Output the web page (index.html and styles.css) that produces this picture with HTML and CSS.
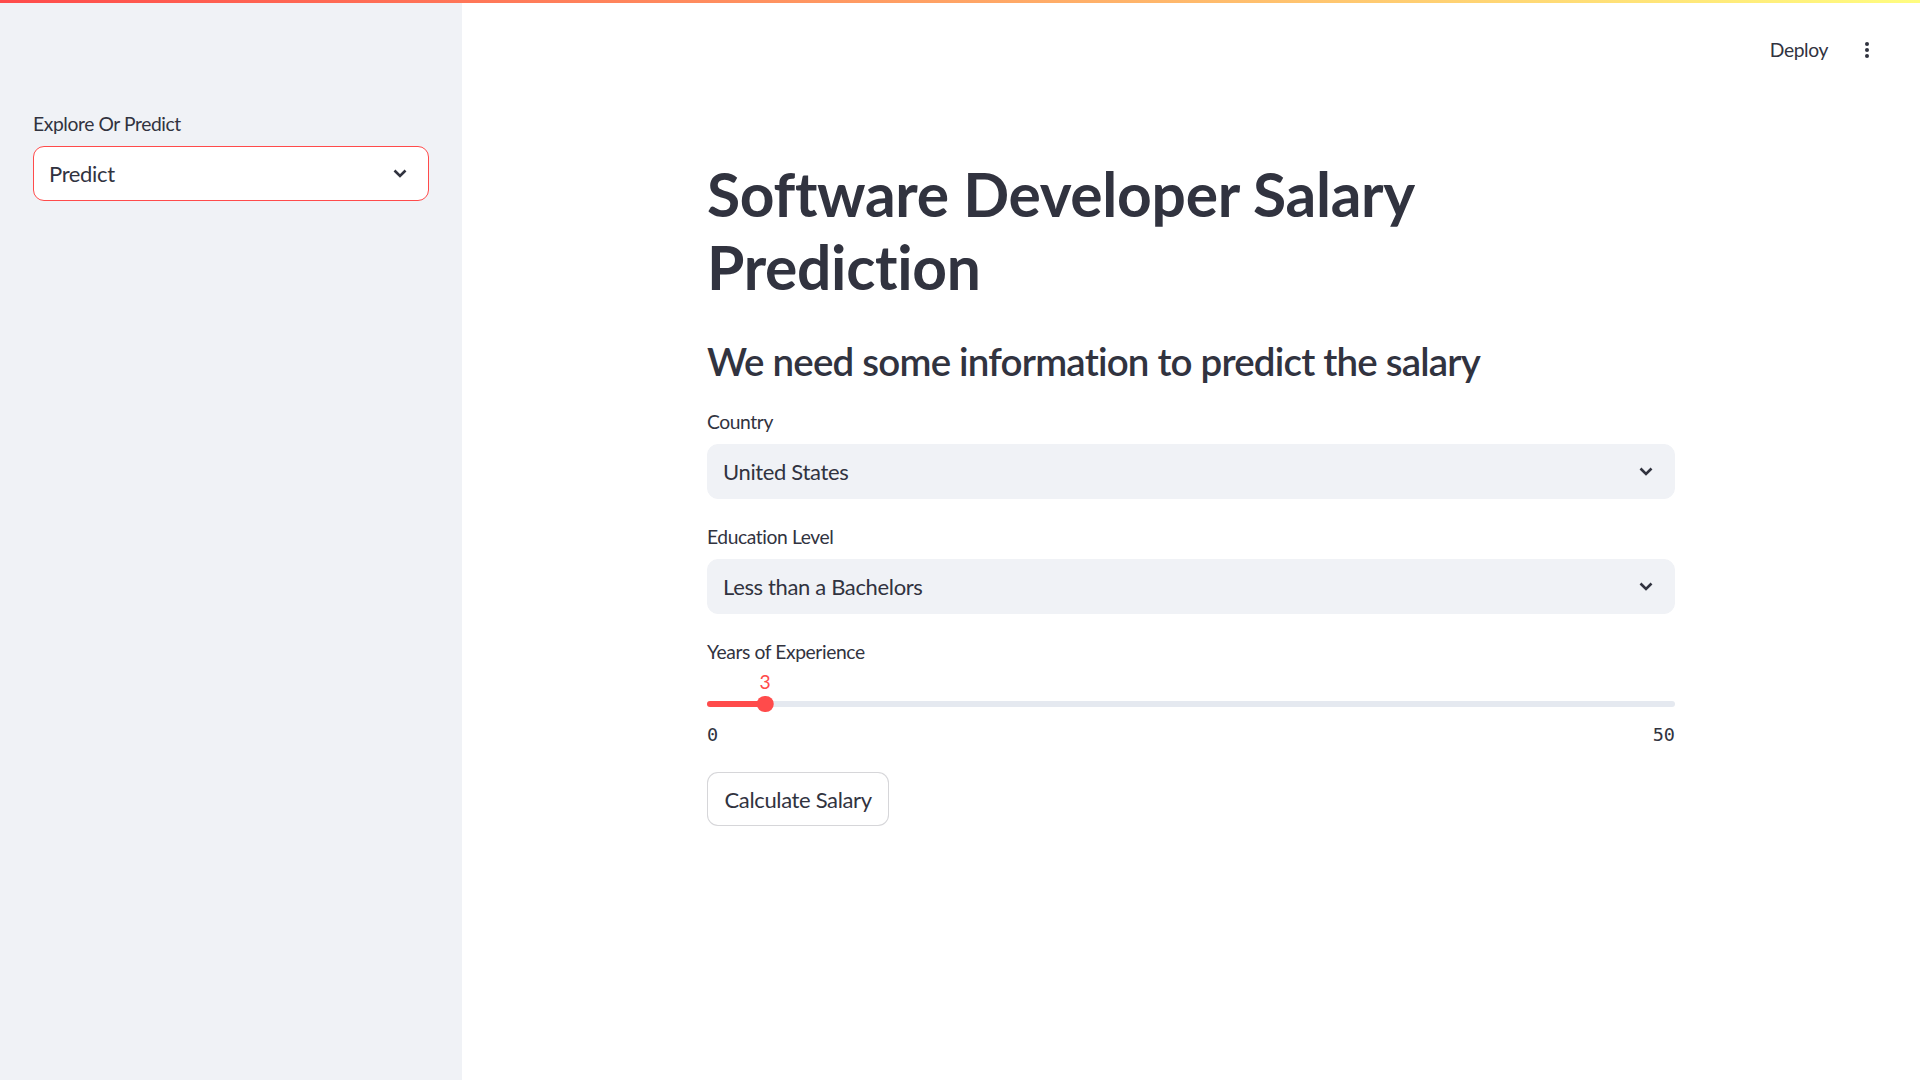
FILE: index.html
```html
<!DOCTYPE html>
<html lang="en">
<head>
<meta charset="utf-8">
<title>Software Developer Salary Prediction</title>
<link rel="stylesheet" href="styles.css">
</head>
<body>
<div class="decoration"></div>
<div class="app">
  <aside class="sidebar">
    <div class="widget">
      <div class="label">Explore Or Predict</div>
      <div class="select select-focused">
        <span class="select-value">Predict</span>
        <svg class="chevron" width="14" height="9" viewBox="0 0 14 9"><path d="M1.5 1.5 L7 7 L12.5 1.5" fill="none" stroke="#31333f" stroke-width="2.6" stroke-linejoin="miter"/></svg>
      </div>
    </div>
  </aside>
  <main class="main">
    <header class="toolbar">
      <span class="deploy">Deploy</span>
      <svg class="menu" width="24" height="24" viewBox="0 0 24 24"><circle cx="12" cy="6" r="2" fill="#31333f"/><circle cx="12" cy="12" r="2" fill="#31333f"/><circle cx="12" cy="18" r="2" fill="#31333f"/></svg>
    </header>
    <section class="block">
      <h1 class="title">Software Developer Salary Prediction</h1>
      <h3 class="subtitle">We need some information to predict the salary</h3>
      <div class="widget">
        <div class="label">Country</div>
        <div class="select">
          <span class="select-value">United States</span>
          <svg class="chevron" width="14" height="9" viewBox="0 0 14 9"><path d="M1.5 1.5 L7 7 L12.5 1.5" fill="none" stroke="#31333f" stroke-width="2.6"/></svg>
        </div>
      </div>
      <div class="widget">
        <div class="label">Education Level</div>
        <div class="select">
          <span class="select-value">Less than a Bachelors</span>
          <svg class="chevron" width="14" height="9" viewBox="0 0 14 9"><path d="M1.5 1.5 L7 7 L12.5 1.5" fill="none" stroke="#31333f" stroke-width="2.6"/></svg>
        </div>
      </div>
      <div class="widget widget-slider">
        <div class="label">Years of Experience</div>
        <div class="slider">
          <div class="slider-value-row">
            <span class="slider-value" style="left: 6%">3</span>
          </div>
          <div class="slider-track-row">
            <div class="track"></div>
            <div class="track-fill" style="width: 6%"></div>
            <div class="thumb" style="left: 6%"></div>
          </div>
          <div class="ticks">
            <span>0</span>
            <span>50</span>
          </div>
        </div>
      </div>
      <div class="widget">
        <button class="button">Calculate Salary</button>
      </div>
    </section>
  </main>
</div>
</body>
</html>
```
FILE: styles.css
```css
* { box-sizing: border-box; }
html, body { margin: 0; padding: 0; }
body {
  font-family: "Lato", "Noto Sans", sans-serif;
  color: #31333f;
  background: #ffffff;
  width: 1920px;
  height: 1080px;
  overflow: hidden;
}
.decoration {
  position: fixed;
  top: 0;
  left: 0;
  right: 0;
  height: 3px;
  background: linear-gradient(90deg, #ff4b4b, #fffd80);
  z-index: 10;
}
.app {
  display: flex;
  height: 1080px;
}
.sidebar {
  width: 462px;
  flex: 0 0 462px;
  background: #f0f2f6;
  padding: 107px 33px 0 33px;
}
.main {
  flex: 1;
  display: flex;
  flex-direction: column;
}
.toolbar {
  height: 99px;
  display: flex;
  align-items: center;
  justify-content: flex-end;
  gap: 27px;
  padding-right: 41px;
}
.deploy {
  font-size: 19.25px;
  letter-spacing: -0.4px;
  color: #31333f;
}
.menu { display: block; }
.block {
  width: 968px;
  margin: 0 auto;
  padding-top: 59px;
  display: flex;
  flex-direction: column;
}
.title {
  margin: 0;
  font-size: 60.5px;
  line-height: 1.2;
  font-weight: 700;
  letter-spacing: -0.3px;
}
.subtitle {
  margin: 35px 0 21px 0;
  font-size: 38.5px;
  line-height: 1.2;
  font-weight: 600;
  letter-spacing: -0.8px;
}
.widget {
  display: flex;
  flex-direction: column;
  margin-bottom: 21.5px;
}
.label {
  font-size: 19.25px;
  line-height: 33px;
  margin-bottom: 5.5px;
  letter-spacing: -0.4px;
}
.select {
  height: 55px;
  border-radius: 11px;
  background: #f0f2f6;
  border: 1px solid #f0f2f6;
  display: flex;
  align-items: center;
  justify-content: space-between;
  padding: 0 21px 0 15px;
}
.select-focused {
  background: #ffffff;
  border-color: #ff4b4b;
}
.select-value {
  font-size: 22px;
  letter-spacing: -0.35px;
}
.chevron { display: block; }
.slider {
  display: flex;
  flex-direction: column;
}
.slider-value-row {
  position: relative;
  height: 22px;
}
.slider-value {
  position: absolute;
  top: 0;
  transform: translateX(-50%);
  font-size: 19.25px;
  line-height: 15px;
  color: #ff4b4b;
}
.slider-track-row {
  position: relative;
  height: 16.5px;
}
.track {
  position: absolute;
  left: 0;
  right: 0;
  top: 5.5px;
  height: 5.5px;
  border-radius: 3px;
  background: #e5e9f0;
}
.track-fill {
  position: absolute;
  left: 0;
  top: 5.5px;
  height: 5.5px;
  border-radius: 3px;
  background: #ff4b4b;
}
.thumb {
  position: absolute;
  top: 0;
  width: 16.5px;
  height: 16.5px;
  border-radius: 50%;
  background: #ff4b4b;
  transform: translateX(-50%);
}
.ticks {
  display: flex;
  justify-content: space-between;
  margin-top: 8.5px;
  font-family: "DejaVu Sans Mono", "Liberation Mono", monospace;
  font-size: 18.5px;
  line-height: 27px;
}
.widget-slider { margin-bottom: 24.5px; }
.button {
  align-self: flex-start;
  height: 54px;
  padding: 0 16.5px;
  border: 1px solid rgba(49, 51, 63, 0.2);
  border-radius: 11px;
  background: #ffffff;
  font-family: inherit;
  font-size: 22px;
  letter-spacing: -0.35px;
  color: #31333f;
}
```
